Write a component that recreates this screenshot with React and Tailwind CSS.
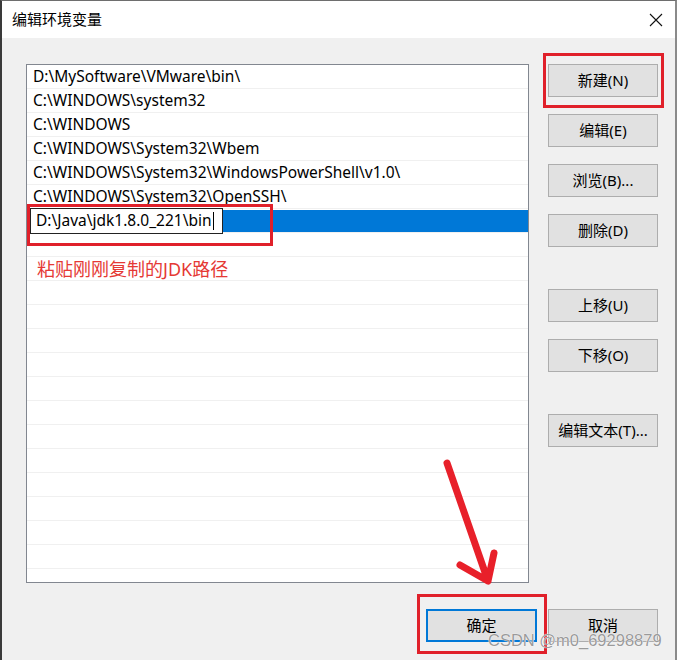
import React from "react";

const rows = [
  "D:\\MySoftware\\VMware\\bin\\",
  "C:\\WINDOWS\\system32",
  "C:\\WINDOWS",
  "C:\\WINDOWS\\System32\\Wbem",
  "C:\\WINDOWS\\System32\\WindowsPowerShell\\v1.0\\",
  "C:\\WINDOWS\\System32\\OpenSSH\\",
];

const font = { fontFamily: '"Noto Sans", "Noto Sans CJK SC", sans-serif' };

function Btn({ children, className = "" }) {
  return (
    <div
      className={
        "w-[110px] h-[33px] flex items-center justify-center bg-[#e1e1e1] border border-[#adadad] text-[15px] text-black " +
        className
      }
    >
      {children}
    </div>
  );
}

export default function App() {
  const blanks = Array.from({ length: 15 });
  return (
    <div
      className="relative w-[677px] h-[660px] overflow-hidden bg-[#f0f0f0] border-t border-l-2 border-r-2 border-t-[#6e6e6e] border-l-[#3a3a3a] border-r-[#8a8a8a]"
      style={font}
    >
      {/* Title bar */}
      <div className="h-[37px] bg-white flex items-center justify-between pl-[10px] pr-[12px]">
        <span className="text-[15px] text-black leading-none">编辑环境变量</span>
        <svg width="14" height="14" viewBox="0 0 14 14">
          <path d="M1 1L13 13M13 1L1 13" stroke="#111" strokeWidth="1.1" />
        </svg>
      </div>

      {/* Body */}
      <div className="flex pl-[24px] pt-[26px]">
        {/* List */}
        <div className="w-[503px] h-[519px] bg-white border border-[#828790] overflow-hidden">
          {rows.map((r) => (
            <div
              key={r}
              className="h-[24px] border-b border-[#f0f0f0] flex items-center pl-[6px] text-[15.5px] text-black leading-none whitespace-nowrap"
            >
              {r}
            </div>
          ))}
          <div className="h-[24px] border-b border-[#f0f0f0] flex items-center">
            <div className="h-[22px] w-full bg-[#0078d7] flex items-center">
              <div className="ml-[3px] w-[193px] h-[26px] bg-white border border-[#222] flex items-center pl-[5px] text-[15.5px] text-black leading-none whitespace-nowrap">
                D:\Java\jdk1.8.0_221\bin
                <span className="inline-block w-[1px] h-[18px] bg-black ml-[1px]" />
              </div>
            </div>
          </div>
          <div className="h-[24px] border-b border-[#f0f0f0]" />
          <div className="h-[24px] border-b border-[#f0f0f0] flex items-center pl-[10px] text-[18px] text-[#e53935] leading-none whitespace-nowrap">
            粘贴刚刚复制的JDK路径
          </div>
          {blanks.map((_, i) => (
            <div key={i} className="h-[24px] border-b border-[#f0f0f0]" />
          ))}
        </div>

        {/* Buttons */}
        <div className="ml-[19px] flex flex-col">
          <Btn>新建(N)</Btn>
          <Btn className="mt-[17px]">编辑(E)</Btn>
          <Btn className="mt-[17px]">浏览(B)...</Btn>
          <Btn className="mt-[17px]">删除(D)</Btn>
          <Btn className="mt-[42px]">上移(U)</Btn>
          <Btn className="mt-[17px]">下移(O)</Btn>
          <Btn className="mt-[42px]">编辑文本(T)...</Btn>
        </div>
      </div>

      {/* Bottom buttons */}
      <div className="flex justify-end gap-[11px] pr-[17px] pt-[26px]">
        <div className="w-[111px] h-[33px] flex items-center justify-center bg-[#e1e1e1] border-2 border-[#0078d7] text-[15px] text-black">
          确定
        </div>
        <Btn>取消</Btn>
      </div>

      {/* Annotations */}
      <div className="absolute left-[541px] top-[52px] w-[121px] h-[55px] border-[3px] border-[#e0202a]" />
      <div className="absolute left-[25px] top-[203px] w-[246px] h-[42px] border-[3px] border-[#e0202a]" />
      <div className="absolute left-[415px] top-[593px] w-[130px] h-[60px] border-[3px] border-[#e0202a]" />
      <svg
        className="absolute left-0 top-0 pointer-events-none"
        width="677"
        height="660"
        viewBox="0 0 677 660"
      >
        <path
          d="M445 462 L486 580 M458 564 L486 580 L492 552"
          stroke="#e8202a"
          strokeWidth="7"
          fill="none"
          strokeLinecap="round"
          strokeLinejoin="round"
        />
      </svg>
      <div
        className="absolute left-[486px] top-[631px] text-[16.5px] leading-none text-[#9a9a9a] whitespace-nowrap"
        style={{ fontFamily: '"Liberation Sans", sans-serif', textShadow: "0 0 1px #fff, 0 0 1px #fff" }}
      >
        CSDN @m0_69298879
      </div>
    </div>
  );
}
